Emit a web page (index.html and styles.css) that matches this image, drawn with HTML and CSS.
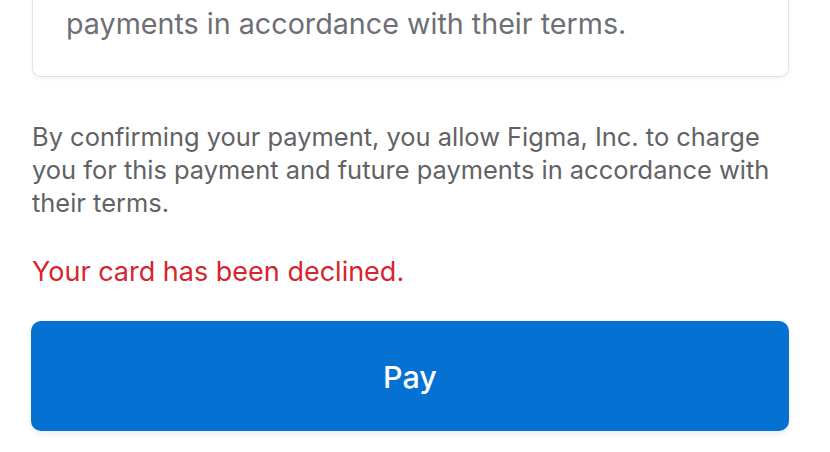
FILE: index.html
```html
<!DOCTYPE html>
<html>
<head>
<meta charset="utf-8">
<link rel="stylesheet" href="styles.css">
</head>
<body>
<main class="page">
  <div class="card">
    <p class="card-text">payments in accordance with their terms.</p>
  </div>
  <p class="notice">By confirming your payment, you allow Figma, Inc. to charge you for this payment and future payments in accordance with their terms.</p>
  <p class="error">Your card has been declined.</p>
  <button class="pay" type="button">Pay</button>
</main>
</body>
</html>
```

FILE: styles.css
```css
html, body {
  margin: 0;
  padding: 0;
  background: #ffffff;
}
body {
  font-family: "Inter", "Roboto", "Liberation Sans", sans-serif;
  width: 830px;
  height: 452px;
  overflow: hidden;
}
.page {
  display: flex;
  flex-direction: column;
  padding: 0 41px 0 31px;
}
.card {
  margin-top: -40px;
  margin-left: 1px;
  border: 1px solid #e2e2e4;
  border-radius: 9px;
  box-shadow: 0 2px 4px rgba(0, 0, 0, 0.05);
  padding: 46px 33px 35px 33px;
}
.card-text {
  margin: 0;
  font-size: 28.7px;
  line-height: 34px;
  color: #6e6e75;
}
.notice {
  margin: 43px 0 0 1px;
  font-size: 25.45px;
  line-height: 33px;
  color: #626266;
}
.error {
  margin: 36px 0 0 1px;
  font-size: 27px;
  line-height: 33px;
  color: #d6262d;
}
.pay {
  margin-top: 33px;
  height: 110px;
  border: none;
  border-radius: 10px;
  background: #0572d3;
  box-shadow: 0 3px 6px rgba(0, 0, 0, 0.08);
  color: #ffffff;
  font-family: inherit;
  font-size: 30.5px;
  font-weight: 500;
  cursor: pointer;
}
```
